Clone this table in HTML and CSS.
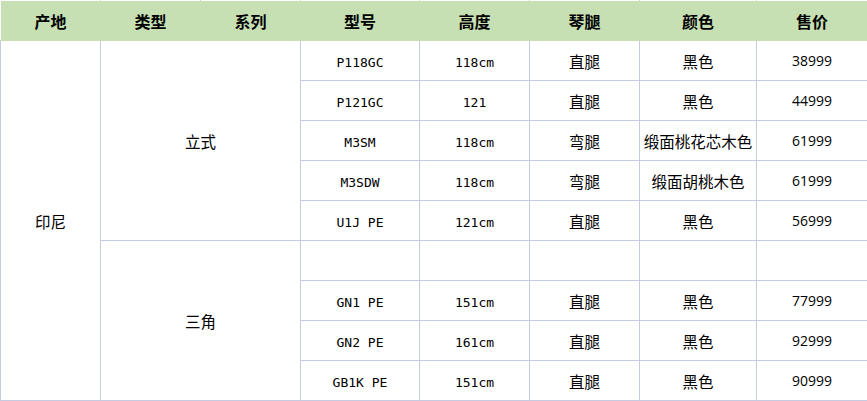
FILE: index.html
```html
<!DOCTYPE html>
<html lang="zh-CN">
<head>
<meta charset="utf-8">
<title>价格表</title>
<link rel="stylesheet" href="styles.css">
</head>
<body>
<table class="price-table">
  <colgroup>
    <col class="c-origin"><col class="c-type"><col class="c-series"><col class="c-model">
    <col class="c-height"><col class="c-leg"><col class="c-color"><col class="c-price">
  </colgroup>
  <thead>
    <tr>
      <th>产地</th><th>类型</th><th>系列</th><th>型号</th><th>高度</th><th>琴腿</th><th>颜色</th><th>售价</th>
    </tr>
  </thead>
  <tbody>
    <tr>
      <td rowspan="9" class="cn">印尼</td>
      <td rowspan="5" colspan="2" class="cn">立式</td>
      <td class="mono">P118GC</td><td class="mono">118cm</td><td class="cn">直腿</td><td class="cn">黑色</td><td class="num">38999</td>
    </tr>
    <tr><td class="mono">P121GC</td><td class="mono">121</td><td class="cn">直腿</td><td class="cn">黑色</td><td class="num">44999</td></tr>
    <tr><td class="mono">M3SM</td><td class="mono">118cm</td><td class="cn">弯腿</td><td class="cn">缎面桃花芯木色</td><td class="num">61999</td></tr>
    <tr><td class="mono">M3SDW</td><td class="mono">118cm</td><td class="cn">弯腿</td><td class="cn">缎面胡桃木色</td><td class="num">61999</td></tr>
    <tr><td class="mono">U1J PE</td><td class="mono">121cm</td><td class="cn">直腿</td><td class="cn">黑色</td><td class="num">56999</td></tr>
    <tr>
      <td rowspan="4" colspan="2" class="cn">三角</td>
      <td></td><td></td><td></td><td></td><td></td>
    </tr>
    <tr><td class="mono">GN1 PE</td><td class="mono">151cm</td><td class="cn">直腿</td><td class="cn">黑色</td><td class="num">77999</td></tr>
    <tr><td class="mono">GN2 PE</td><td class="mono">161cm</td><td class="cn">直腿</td><td class="cn">黑色</td><td class="num">92999</td></tr>
    <tr><td class="mono">GB1K PE</td><td class="mono">151cm</td><td class="cn">直腿</td><td class="cn">黑色</td><td class="num">90999</td></tr>
  </tbody>
</table>
</body>
</html>
```
FILE: styles.css
```css
html, body {
  margin: 0;
  padding: 0;
  background: #ffffff;
}

.price-table {
  width: 867px;
  table-layout: fixed;
  border-collapse: collapse;
  color: #000;
  font-family: "Noto Sans CJK SC", "Noto Sans", sans-serif;
}

.c-origin { width: 100px; }
.c-type { width: 100px; }
.c-series { width: 100px; }
.c-model { width: 119px; }
.c-height { width: 110px; }
.c-leg { width: 110px; }
.c-color { width: 117px; }
.c-price { width: 111px; }

.price-table th {
  height: 39px;
  padding: 0;
  background: #c6e0b4;
  border: 1px solid #ffffff;
  border-bottom-color: #c6e0b4;
  border-left-color: #c6e0b4;
  border-right-color: #c6e0b4;
  font-size: 16px;
  font-weight: 700;
  text-align: center;
  vertical-align: middle;
  line-height: 20px;
}

.price-table th:first-child {
  border-left-color: #ffffff;
}

.price-table td {
  height: 39px;
  padding: 0;
  border: 1px solid #c5cbe0;
  text-align: center;
  vertical-align: middle;
  line-height: 20px;
  white-space: nowrap;
}

.price-table thead + tbody tr:first-child td {
  border-top-color: #c6e0b4;
}

.cn {
  font-family: "Noto Sans CJK SC", sans-serif;
  font-size: 15.5px;
}

.price-table td.mono {
  font-family: "DejaVu Sans Mono", monospace;
  font-size: 13px;
  padding-top: 4px;
  height: 35px;
}

.price-table td.num {
  font-family: "Open Sans", sans-serif;
  font-size: 14px;
  padding-top: 1px;
  height: 38px;
}
```
